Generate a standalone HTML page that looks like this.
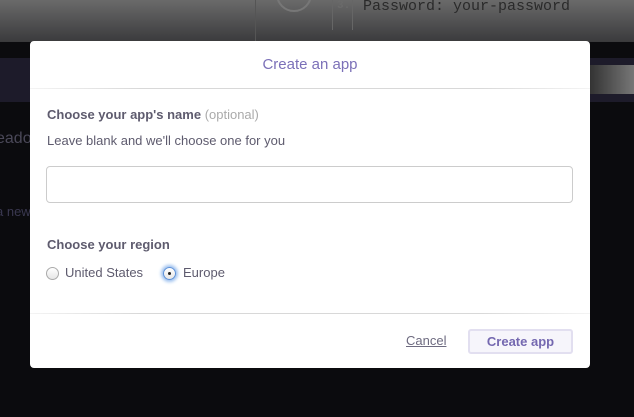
<!DOCTYPE html>
<html><head><style>
body{margin:0;width:634px;height:417px;overflow:hidden;background:#0b0b0e;font-family:"Liberation Sans",sans-serif;position:relative}
.top{position:absolute;left:0;top:0;width:634px;height:42px;background:linear-gradient(#6a6a6a,#3a3a3c)}
.band{position:absolute;left:0;top:58px;width:634px;height:44px;background:#1d1b2a}
.gbox{position:absolute;left:590px;top:65px;width:44px;height:29px;background:linear-gradient(90deg,#333,#777)}
.bgtxt{position:absolute;color:#2a2836;font-size:15px}
.modal{position:absolute;left:30px;top:41px;width:560px;height:327px;background:#fff;border-radius:4px}
.title{position:absolute;top:15px;width:100%;text-align:center;color:#7b70b8;font-size:15px}
.hr{position:absolute;left:0;width:560px;height:1px;background:linear-gradient(90deg,#f4f4f4,#d8d8d8 20%,#d8d8d8 80%,#f4f4f4)}
.lbl{position:absolute;left:17px;font-size:13px;font-weight:bold;color:#5e5b6e}
.lbl span{font-weight:normal;color:#aaa}
.sub{position:absolute;left:17px;top:92px;font-size:13px;color:#5e5b6e}
.inp{position:absolute;left:16px;top:125px;width:525px;height:35px;border:1px solid #ccc;border-radius:4px}
.radio{position:absolute;top:224px;font-size:13px;color:#5e5b6e}
.rc{position:absolute;width:11px;height:11px;border-radius:50%;border:1px solid #aaa;background:linear-gradient(#fff,#e6e6e6)}
.cancel{position:absolute;left:376px;top:292px;font-size:13px;color:#6e6b80;text-decoration:underline}
.btn{position:absolute;left:438px;top:288px;width:101px;height:21px;border:2px solid #e2dff0;border-radius:3px;background:#f6f5fb;color:#7468b0;font-weight:bold;font-size:13px;text-align:center;line-height:21px}
</style></head><body>
<div class="top"></div>
<div style="position:absolute;left:255px;top:0;width:1px;height:42px;background:#555"></div>
<div style="position:absolute;left:276px;top:-24px;width:32px;height:32px;border:2px solid #777;border-radius:50%"></div>
<div style="position:absolute;left:332px;top:0;width:1px;height:30px;background:#666"></div>
<div style="position:absolute;left:352px;top:0;width:1px;height:30px;background:#666"></div>
<div style="position:absolute;left:337px;top:0;font:bold 11px 'Liberation Mono',monospace;color:#6a6a6a">3.</div>
<div style="position:absolute;left:363px;top:-2px;font:15px 'Liberation Mono',monospace;color:#2a2a2a">Password: your-password</div>
<div style="position:absolute;left:60px;top:-8px;font:10px 'Liberation Sans',sans-serif;color:#333">Learn more at devcenter.heroku.com</div>
<div class="band"></div>
<div class="gbox"></div>
<div class="bgtxt" style="left:-4px;top:130px;color:#4a4858;font-size:16px">eado</div>
<div class="bgtxt" style="left:-4px;top:204px;color:#3a3850;font-size:13px">a new</div>
<div class="modal">
<div class="title">Create an app</div>
<div class="hr" style="top:47px"></div>
<div class="lbl" style="top:66px">Choose your app's name <span>(optional)</span></div>
<div class="sub">Leave blank and we'll choose one for you</div>
<div class="inp"></div>
<div class="lbl" style="top:196px">Choose your region</div>
<div class="radio" style="left:16px"><span class="rc" style="left:0;top:2px"></span><span style="margin-left:19px">United States</span></div>
<div class="radio" style="left:133px"><span class="rc" style="left:0;top:2px;border-color:#5a8fd8;box-shadow:0 0 3px 2px #9cc0ef"></span><span style="position:absolute;left:5px;top:7px;width:3px;height:3px;border-radius:50%;background:#222"></span><span style="margin-left:20px">Europe</span></div>
<div class="hr" style="top:272px"></div>
<div class="cancel">Cancel</div>
<div class="btn">Create app</div>
</div>
</body></html>
